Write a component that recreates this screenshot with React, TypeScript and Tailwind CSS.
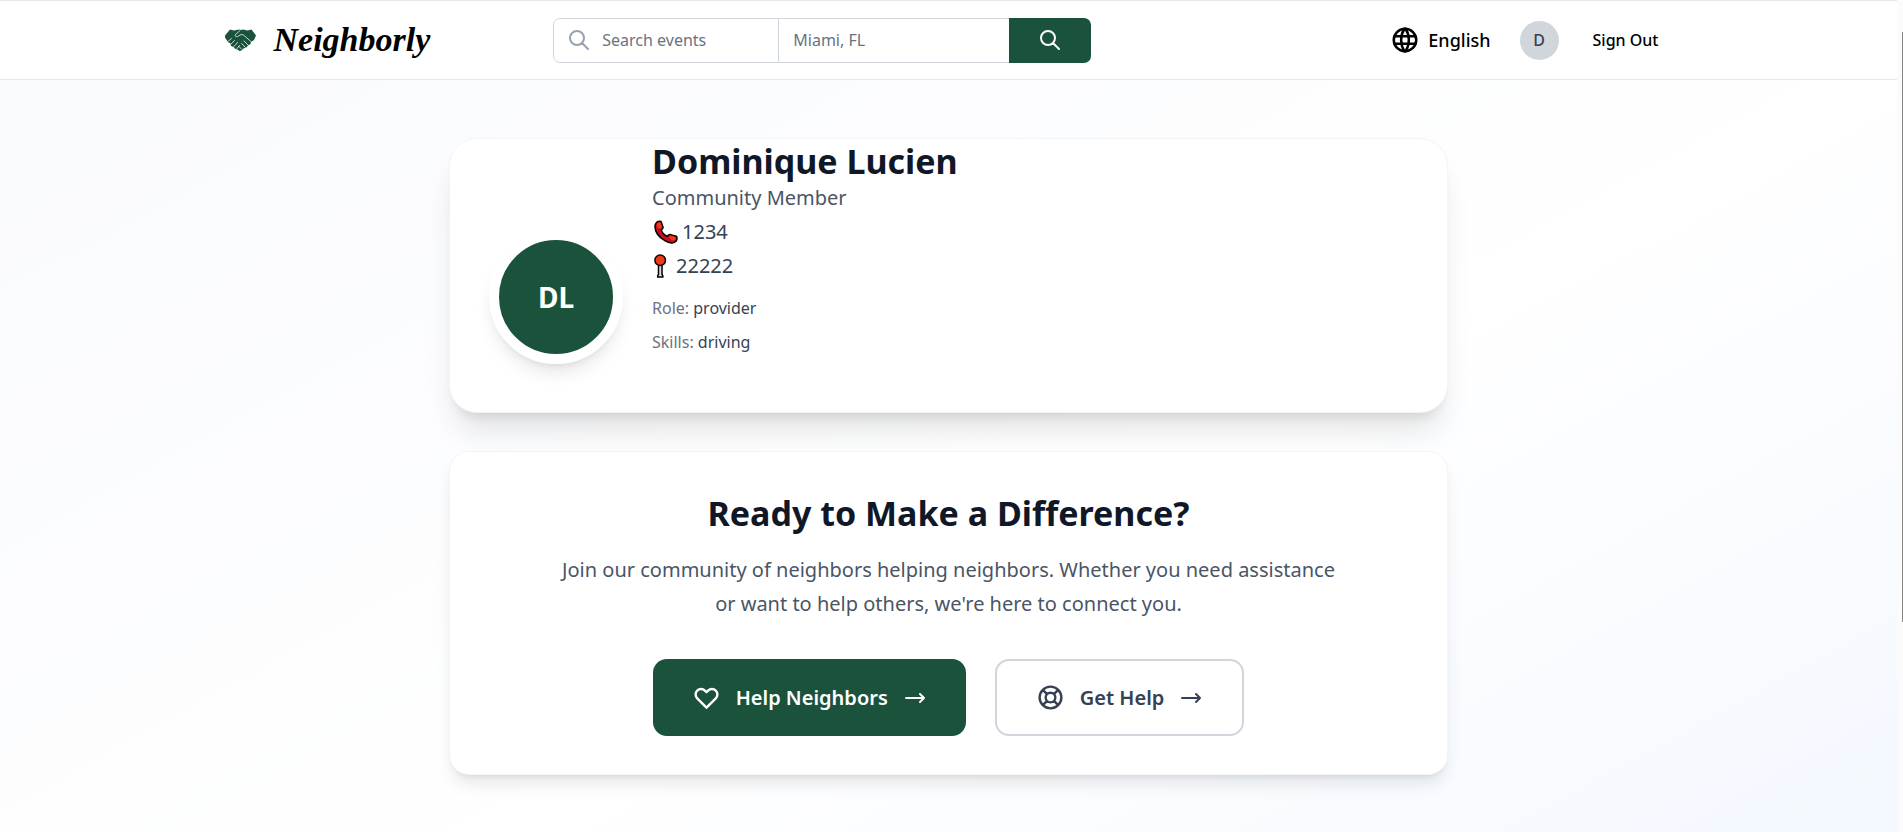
import { useState } from 'react'
import { HiOutlineArrowNarrowRight, HiOutlineHeart, HiOutlineSearch, HiOutlineSupport } from 'react-icons/hi'
import { TbWorld } from 'react-icons/tb'

const profile = {
  name: 'Dominique Lucien',
  title: 'Community Member',
  phone: '1234',
  zip: '22222',
  role: 'provider',
  skills: 'driving',
}

function HandshakeLogo() {
  return (
    <svg viewBox="0 0 62 44" className="h-[22px] w-[31px]" aria-hidden="true">
      <path fill="#1b523b" d="M10 1l8 2 10-2 4 1 4-1 9 2 8-2 9 12-4 9-6 4-1 4-5 3-3 4-6 2-4 4-4 1-4-3-4-1-4-4-5-2-1-5-5-3-6-9L0 13z" />
      <g fill="none" stroke="#fff" strokeWidth="1.5" strokeLinecap="round" strokeLinejoin="round">
        <path d="M30 3l-9 8c-2 3 1 5 4 4l7-4 5 1 16 14" />
        <path d="M38 24l9 9M33 29l8 8M28 35l5 5" />
        <path d="M7 24l6-5M12 30l7-7M18 35l7-8M24 39l5-6" />
      </g>
    </svg>
  )
}

function PhoneIcon() {
  return (
    <svg viewBox="0 0 24 24" className="h-6 w-6" aria-hidden="true">
      <path fill="#c50f1f" stroke="#000" strokeWidth="1.5" strokeLinejoin="round" d="M2 3.2C3 1.5 5.5.8 7 1.5L9 7c.2 1.3-.5 2.2-1.800 2.800.8 2.700 3.400 5.500 6.200 6.600.8-1.400 1.800-2 3-1.800l5.800 1.600c1.200.8 1 3.300-.2 5-1.500 2.300-6.500 2.400-11.200-.6C4.500 17.500.6 11 1 6c.1-1.200.5-2.200 1-2.800z" />
      <path fill="#f03a17" d="M3 3.5C4 2.200 5.500 2 6.400 2.300L8 7c0 .9-.8 1.500-2 1.800L3.300 7.500zM15 17.200c.6-1.200 1.300-1.600 2-1.400l4.500 1.300c.6.5.4 2-.5 3l-3 .4z" />
    </svg>
  )
}

function PinIcon() {
  return (
    <svg viewBox="0 0 18 24" className="h-6 w-[18px]" aria-hidden="true">
      <path fill="#ddd" stroke="#000" strokeWidth="1.5" d="M4.500 11h3.500v9.500l.8 1.200v1.400H3.700v-1.400l.8-1.200z" />
      <circle cx="6.2" cy="6.2" r="5.3" fill="#f03a17" stroke="#000" strokeWidth="1.5" />
    </svg>
  )
}

function Header() {
  const [query, setQuery] = useState('')
  const [place, setPlace] = useState('')

  return (
    <header className="border-y border-gray-200 bg-white">
      <div className="mx-auto flex h-[78px] max-w-[1536px] items-center px-11">
        <a href="#" className="flex items-center gap-[18px]">
          <HandshakeLogo />
          <span className="font-['Liberation_Serif',serif] text-[34px] leading-[40px] font-bold italic">Neighborly</span>
        </a>

        <form className="mr-auto ml-[123px] flex h-[45px]" onSubmit={e => e.preventDefault()}>
          <label className="relative flex items-center">
            <HiOutlineSearch className="absolute left-[14px] h-6 w-6 text-gray-400" />
            <input aria-label="Search events" placeholder="Search events" value={query} onChange={e => setQuery(e.target.value)}
              className="h-full w-[226px] rounded-l-[7px] border border-gray-300 pl-12 text-[16px] placeholder:text-gray-500 focus:outline-none" />
          </label>
          <input aria-label="Location" placeholder="Miami, FL" value={place} onChange={e => setPlace(e.target.value)}
            className="w-[230px] border-y border-gray-300 pl-[14px] text-[16px] placeholder:text-gray-500 focus:outline-none" />
          <button type="submit" aria-label="Search" className="flex w-[82px] items-center justify-center rounded-r-[7px] bg-[#1b523b] text-white">
            <HiOutlineSearch className="h-6 w-6" />
          </button>
        </form>

        <div className="flex items-center">
          <button className="flex items-center gap-2 text-[18px] font-medium">
            <TbWorld className="h-[30px] w-[30px]" />
            English
          </button>
          <div className="ml-[29px] flex h-[39px] w-[39px] items-center justify-center rounded-full bg-gray-300 text-[16px] font-medium text-gray-700">D</div>
          <button className="ml-5 px-[14px] text-[16px] font-medium">Sign Out</button>
        </div>
      </div>
    </header>
  )
}

function ProfileCard() {
  return (
    <section className="flex gap-[29px] rounded-[28px] border border-gray-100 bg-white px-[39px] pt-0.5 pb-12 shadow-[0_24px_30px_-6px_rgba(0,0,0,0.1),0_10px_12px_-7px_rgba(0,0,0,0.1)]">
      <div className="flex h-[134px] w-[134px] shrink-0 items-center justify-center self-end rounded-full border-[10px] border-white bg-[#1b523b] text-[28px] font-bold text-white shadow-[0_12px_18px_-4px_rgba(0,0,0,0.1),0_5px_7px_-5px_rgba(0,0,0,0.1)]">
        DL
      </div>
      <div className="pb-[5px] text-[20px] leading-[34px] text-gray-700">
        <h1 className="text-[34px] leading-[40px] font-bold text-gray-900">{profile.name}</h1>
        <p className="text-gray-600">{profile.title}</p>
        <p className="flex items-center gap-1 pl-0.5"><PhoneIcon />{profile.phone}</p>
        <p className="flex items-center gap-1 pl-0.5"><PinIcon />{profile.zip}</p>
        <div className="mt-2 text-[16px]">
          <p><span className="text-gray-500">Role:</span> {profile.role}</p>
          <p><span className="text-gray-500">Skills:</span> {profile.skills}</p>
        </div>
      </div>
    </section>
  )
}

function CallToAction() {
  return (
    <section className="rounded-[20px] border border-gray-100 bg-white p-[38px] text-center shadow-[0_12px_18px_-4px_rgba(0,0,0,0.1),0_5px_7px_-5px_rgba(0,0,0,0.1)]">
      <h2 className="text-[34px] leading-[46px] font-bold text-gray-900">Ready to Make a Difference?</h2>
      <p className="mx-auto mt-[17px] max-w-[790px] text-[20px] leading-[34px] text-gray-600">
        Join our community of neighbors helping neighbors. Whether you need assistance or want to help others, we're here to connect you.
      </p>
      <div className="mt-[38px] flex justify-center gap-[29px] text-[20px] leading-[28px] font-semibold">
        <button className="flex items-center gap-[15px] rounded-[14px] bg-[#1b523b] px-[39px] py-6 text-white">
          <HiOutlineHeart className="h-[29px] w-[29px]" />
          Help Neighbors
          <HiOutlineArrowNarrowRight className="h-6 w-6" />
        </button>
        <button className="flex items-center gap-[15px] rounded-[14px] border-2 border-gray-300 bg-white px-[39px] text-gray-700">
          <HiOutlineSupport className="h-[29px] w-[29px]" />
          Get Help
          <HiOutlineArrowNarrowRight className="h-6 w-6" />
        </button>
      </div>
    </section>
  )
}

export default function App() {
  return (
    <div className="flex min-h-screen font-['Noto_Sans',sans-serif] text-black">
      <div className="flex flex-1 flex-col">
        <Header />
        <main className="flex-1 bg-gradient-to-br from-[#f9fafe] via-white to-blue-50 bg-[length:100%_139%] bg-no-repeat pt-[58px] pb-[56px]">
          <div className="mx-auto flex max-w-[1075px] flex-col gap-[38px] px-[38px]">
            <ProfileCard />
            <CallToAction />
          </div>
        </main>
      </div>

      {/* Scroll track */}
      <div className="flex w-1.5 justify-end bg-[#fbfbfb] pt-8">
        <div className="h-[590px] w-px bg-[#858585]" />
      </div>
    </div>
  )
}
